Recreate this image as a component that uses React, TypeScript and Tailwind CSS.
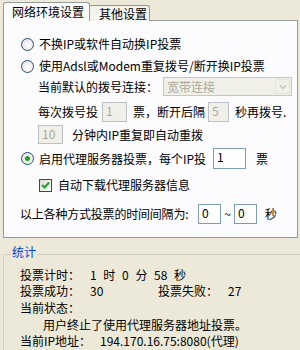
import React from "react";

const font = { fontFamily: '"Noto Sans CJK SC", "Noto Sans", sans-serif' };

function Radio({ checked }: { checked?: boolean }) {
  return (
    <span className="w-[13px] h-[13px] rounded-full border border-[#1c5180] bg-[radial-gradient(circle_at_60%_60%,#ffffff,#dcdcd6)] flex items-center justify-center shrink-0">
      {checked && <span className="w-[5px] h-[5px] rounded-full bg-[#21a121]" />}
    </span>
  );
}

function Check() {
  return (
    <span className="w-[13px] h-[13px] border border-[#1c5180] bg-[linear-gradient(135deg,#dcdcd6,#ffffff)] flex items-center justify-center shrink-0">
      <svg width="9" height="9" viewBox="0 0 9 9">
        <path d="M1 4 L3.5 6.5 L8 1.5" stroke="#21a121" strokeWidth="2" fill="none" />
      </svg>
    </span>
  );
}

function Field({ value, w, h = "h-[20px]", off }: { value: string; w: string; h?: string; off?: boolean }) {
  return (
    <span
      className={
        off
          ? `${w} ${h} border border-[#b9c0c6] bg-[#f1f0e8] text-[#aca899] pl-[3px] leading-[15px] shrink-0`
          : `${w} ${h} border border-[#7f9db9] bg-white text-black pl-[3px] leading-[15px] shrink-0`
      }
    >
      {value}
    </span>
  );
}

export default function App() {
  return (
    <div
      className="w-[300px] h-[350px] bg-[#ece9d8] overflow-hidden pl-[3px] pt-[2px] text-[12px] leading-[16px] text-black whitespace-nowrap"
      style={font}
    >
      {/* tabs */}
      <div className="flex items-end h-[19px] relative z-10">
        <div className="w-[87px] h-[19px] border-l border-t border-r border-[#919b9c] rounded-t-[3px] bg-[#fcfcfe] pl-[8px] pt-[1px]">
          网络环境设置
        </div>
        <div className="w-[60px] h-[16px] border-t border-r border-[#919b9c] rounded-tr-[3px] bg-[#f4f3ee] pl-[9px] leading-[15px]">
          其他设置
        </div>
      </div>

      {/* panel */}
      <div className="w-[295px] h-[218px] -mt-px border border-[#919b9c] bg-[#fcfcfe] flex flex-col">
        <div className="flex items-center h-[20px] mt-[13px] pl-[17px] gap-[5px]">
          <Radio />
          <span>不换IP或软件自动换IP投票</span>
        </div>
        <div className="flex items-center h-[20px] mt-[2px] pl-[17px] gap-[5px]">
          <Radio />
          <span>使用Adsl或Modem重复拨号/断开换IP投票</span>
        </div>
        <div className="flex items-center h-[19px] mt-[1px] pl-[34px]">
          <span className="w-[125px]">当前默认的拨号连接：</span>
          <span className="w-[129px] h-[19px] border border-[#c9c7ba] bg-[#f1f0e8] flex items-center">
            <span className="flex-1 pl-[3px] text-[#aca899] leading-[15px]">宽带连接</span>
            <span className="w-[15px] h-[15px] mr-[1px] rounded-[2px] bg-[#f0efe8] border border-[#e6e4da] flex items-center justify-center">
              <svg width="8" height="6" viewBox="0 0 8 6">
                <path d="M1 1.5 L4 4.5 L7 1.5" stroke="#c9c7ba" strokeWidth="1.5" fill="none" />
              </svg>
            </span>
          </span>
        </div>
        <div className="flex items-center h-[20px] mt-[6px] pl-[34px]">
          <span className="w-[64px]">每次拨号投</span>
          <Field value="1" w="w-[25px]" off />
          <span className="ml-[6px] w-[75px]">票，断开后隔</span>
          <Field value="5" w="w-[21px]" off />
          <span className="ml-[6px]">秒再拨号.</span>
        </div>
        <div className="flex items-center h-[19px] mt-[3px] pl-[34px]">
          <Field value="10" w="w-[25px]" h="h-[19px]" off />
          <span className="ml-[9px]">分钟内IP重复即自动重拨</span>
        </div>
        <div className="flex items-center h-[21px] mt-[4px] pl-[17px]">
          <Radio checked />
          <span className="ml-[5px] w-[174px]">启用代理服务器投票，每个IP投</span>
          <Field value="1" w="w-[33px]" h="h-[21px]" />
          <span className="ml-[10px]">票</span>
        </div>
        <div className="flex items-center h-[18px] mt-[7px] pl-[35px]">
          <Check />
          <span className="ml-[6px]">自动下载代理服务器信息</span>
        </div>
        <div className="flex items-center h-[20px] mt-[10px] pl-[16px]">
          <span className="w-[178px] tracking-[-0.2px]">以上各种方式投票的时间间隔为:</span>
          <Field value="0" w="w-[23px]" />
          <span className="w-[13px] text-center">~</span>
          <Field value="0" w="w-[23px]" />
          <span className="ml-[8px]">秒</span>
        </div>
      </div>

      {/* stats */}
      <div className="mt-[7px] pl-[8px] h-[14px] leading-[14px] flex relative z-10">
        <span className="px-[1px] bg-[#ece9d8] text-[#0046d5]">统计</span>
      </div>
      <div className="-mt-[5px] w-[310px] h-[110px] border border-[#d0d0bf] rounded-[3px] pl-[16px]">
        <div className="flex items-center h-[16px] mt-[12px]">
          <span className="w-[70px]">投票计时：</span>
          <span className="[word-spacing:4px]">1 时 0 分 58 秒</span>
        </div>
        <div className="flex items-center h-[16px]">
          <span className="w-[70px]">投票成功：</span>
          <span className="w-[68px]">30</span>
          <span className="w-[70px]">投票失败：</span>
          <span>27</span>
        </div>
        <div className="flex items-center h-[16px] mt-[1px]">当前状态：</div>
        <div className="flex items-center h-[16px] mt-[1px] pl-[23px]">用户终止了使用代理服务器地址投票。</div>
        <div className="flex items-center h-[16px]">
          <span className="w-[80px]">当前IP地址：</span>
          <span>194.170.16.75:8080(代理)</span>
        </div>
      </div>
    </div>
  );
}
